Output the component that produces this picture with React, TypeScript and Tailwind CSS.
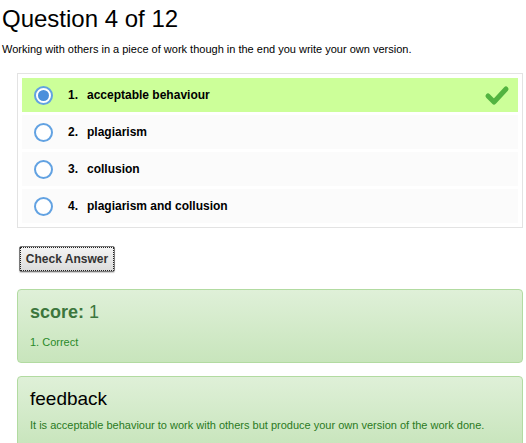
import React from "react";

const options = [
  { n: "1.", label: "acceptable behaviour" },
  { n: "2.", label: "plagiarism" },
  { n: "3.", label: "collusion" },
  { n: "4.", label: "plagiarism and collusion" },
];

const Radio = ({ checked }: { checked: boolean }) => (
  <span className="flex items-center justify-center w-[19px] h-[19px] rounded-full border-2 border-[#62a2e2] bg-white shrink-0">
    {checked && <span className="w-[11px] h-[11px] rounded-full bg-[#4a8fdb]" />}
  </span>
);

const Check = () => (
  <svg width="26" height="22" viewBox="0 0 26 22" className="mr-[8px]">
    <polyline
      points="4,12 10,18 22,5"
      fill="none"
      stroke="#52b440"
      strokeWidth="5"
      strokeLinecap="round"
      strokeLinejoin="round"
    />
  </svg>
);

export default function App() {
  const selected = 0;
  return (
    <div className="min-h-screen bg-white text-black font-['Liberation_Sans',Arial,sans-serif]">
      <h1 className="pl-[2px] pt-[7px] text-[24px] leading-[24px]">Question 4 of 12</h1>
      <p className="pl-[2px] mt-[12px] text-[11px] leading-[13px]">
        Working with others in a piece of work though in the end you write your own version.
      </p>

      <div className="ml-[17px] w-[506px] mt-[17px]">
        <div className="border border-[#e3e3e3] bg-white p-[4px] flex flex-col gap-[3px]">
          {options.map((o, i) => (
            <div
              key={o.n}
              className={`flex items-center h-[34px] pl-[12px] ${
                i === selected ? "bg-[#ccff99]" : "bg-[#fbfbfb]"
              }`}
            >
              <Radio checked={i === selected} />
              <span className="ml-[15px] w-[19px] text-[12px] font-bold">{o.n}</span>
              <span className="text-[12px] font-bold">{o.label}</span>
              <span className="flex-1" />
              {i === selected && <Check />}
            </div>
          ))}
        </div>

        <button className="mt-[18px] ml-[2px] w-[96px] h-[26px] rounded-[2px] border border-[#7a7a7a] bg-gradient-to-b from-[#f4f4f4] to-[#dcdcdc] text-[12px] font-bold text-[#333] outline-1 outline-dotted outline-[#222] -outline-offset-2 shadow-[0_1px_1px_rgba(0,0,0,0.2)]">
          Check Answer
        </button>

        <div className="mt-[17px] rounded-[4px] border border-[#b2dba1] bg-gradient-to-b from-[#dff0d8] to-[#c8e5bc] pl-[12px] pt-[12px] pb-[13px]">
          <h3 className="text-[18px] leading-[20px] text-[#3c763d]">
            <span className="font-bold">score:</span> 1
          </h3>
          <p className="mt-[14px] text-[11px] leading-[13px] text-[#2a8a2a]">1. Correct</p>
        </div>

        <div className="mt-[13px] rounded-[4px] border border-[#b2dba1] bg-gradient-to-b from-[#dff0d8] to-[#c8e5bc] pl-[12px] pt-[11px] pb-[14px]">
          <h3 className="text-[19px] leading-[22px] text-black">feedback</h3>
          <p className="mt-[9px] text-[11px] leading-[13px] text-[#2a7a1e]">
            It is acceptable behaviour to work with others but produce your own version of the work done.
          </p>
        </div>
      </div>
    </div>
  );
}
